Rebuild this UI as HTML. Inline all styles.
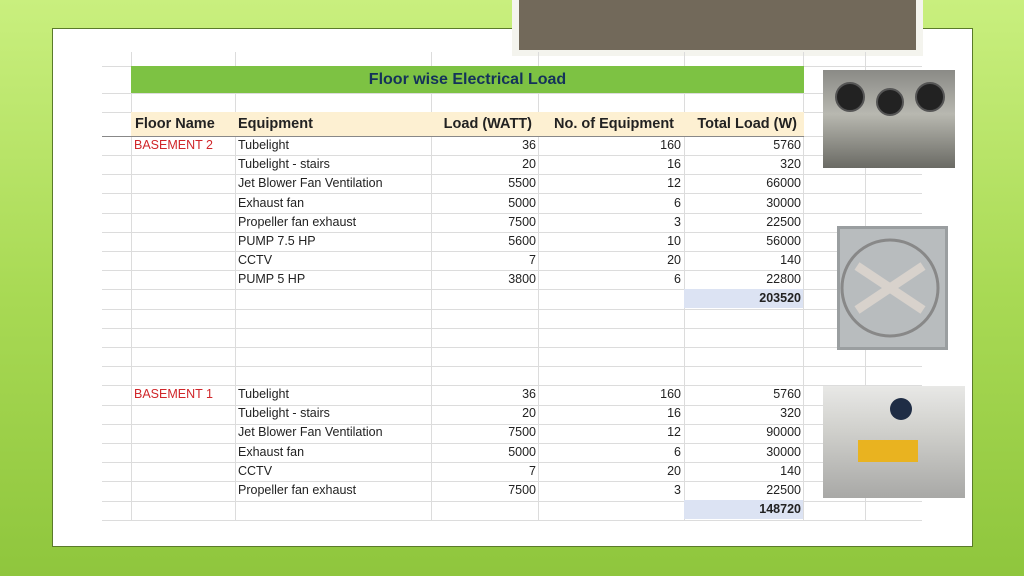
<!DOCTYPE html><html><head><style>
body{margin:0;width:1024px;height:576px;overflow:hidden;background:linear-gradient(180deg,#c9ef7e 0%,#a9da55 50%,#8fc63d 100%);font-family:"Liberation Sans",sans-serif;position:relative}
.panel{position:absolute;left:52px;top:28px;width:921px;height:519px;background:#fff;border:1px solid #5a7a2a;box-sizing:border-box}
.frame{position:absolute;left:512px;top:0;width:411px;height:56px;background:#f4f4ee}
.dark{position:absolute;left:519px;top:0;width:397px;height:50px;background:#72695a}
.c{position:absolute;font-size:12.5px;color:#222;line-height:19px;white-space:nowrap}
.r{text-align:right}
.hl{position:absolute;height:1px;background:#dcdcdc}
.vl{position:absolute;width:1px;background:#dcdcdc}
.red{color:#d0262a}
</style></head><body>
<div class="panel"></div>
<div class="frame"></div><div class="dark"></div>
<div id="g"></div>
<div style="position:absolute;left:131px;top:66px;width:673px;height:27px;background:#7dc243;text-align:center;font:bold 16px/27px 'Liberation Sans',sans-serif;color:#14325a">Floor wise Electrical Load</div>
<div style="position:absolute;left:131px;top:112px;width:673px;height:24px;background:#fdf0d2"></div>
<div style="position:absolute;left:102px;top:136px;width:702px;height:1px;background:#888"></div>
<div style="position:absolute;left:684px;top:289px;width:119px;height:19px;background:#dce3f3"></div>
<div style="position:absolute;left:684px;top:500px;width:119px;height:19px;background:#dce3f3"></div>
<div class="c" style="left:135px;top:115px;font-weight:bold;font-size:14.5px">Floor Name</div>
<div class="c" style="left:238px;top:115px;font-weight:bold;font-size:14.5px">Equipment</div>
<div class="c r" style="left:431px;width:101px;top:115px;font-weight:bold;font-size:14.5px">Load (WATT)</div>
<div class="c r" style="left:538px;width:136px;top:115px;font-weight:bold;font-size:14.5px">No. of Equipment</div>
<div class="c r" style="left:684px;width:113px;top:115px;font-weight:bold;font-size:14.5px">Total Load (W)</div>
<div id="t"></div>
<script>
var g=document.getElementById('g'),h='',t='';
var ys=[66,93,112,136];for(var y=155;y<=520;y+=19.2)ys.push(Math.round(y));
ys.forEach(function(y){h+='<div class="hl" style="left:102px;top:'+y+'px;width:820px"></div>'});
[131,235,431,538,684,803,865].forEach(function(x){h+='<div class="vl" style="left:'+x+'px;top:52px;height:468px"></div>'});
function row(y,a,b,c,d,e,bold){
 if(a)t+='<div class="c red" style="left:134px;top:'+y+'px">'+a+'</div>';
 if(b)t+='<div class="c" style="left:238px;top:'+y+'px">'+b+'</div>';
 if(c)t+='<div class="c r" style="left:431px;width:105px;top:'+y+'px">'+c+'</div>';
 if(d)t+='<div class="c r" style="left:538px;width:143px;top:'+y+'px">'+d+'</div>';
 if(e)t+='<div class="c r" style="left:684px;width:117px;top:'+y+'px;'+(bold?'font-weight:bold':'')+'">'+e+'</div>';
}
var r1=[['BASEMENT 2','Tubelight',36,160,5760],['','Tubelight - stairs',20,16,320],['','Jet Blower Fan Ventilation',5500,12,66000],['','Exhaust fan',5000,6,30000],['','Propeller fan exhaust',7500,3,22500],['','PUMP 7.5 HP',5600,10,56000],['','CCTV',7,20,140],['','PUMP 5 HP',3800,6,22800]];
r1.forEach(function(r,i){row(136+i*19.2,r[0],r[1],r[2],r[3],r[4])});
row(289,'','','','','203520',1);
var r2=[['BASEMENT 1','Tubelight',36,160,5760],['','Tubelight - stairs',20,16,320],['','Jet Blower Fan Ventilation',7500,12,90000],['','Exhaust fan',5000,6,30000],['','CCTV',7,20,140],['','Propeller fan exhaust',7500,3,22500]];
r2.forEach(function(r,i){row(385+i*19.2,r[0],r[1],r[2],r[3],r[4])});
row(500,'','','','','148720',1);
g.innerHTML=h;document.getElementById('t').innerHTML=t;
</script>
<div style="position:absolute;left:823px;top:70px;width:132px;height:98px;background:linear-gradient(180deg,#8a8a86,#b8b8b0 45%,#6a6a64)"></div>
<svg style="position:absolute;left:823px;top:70px" width="132" height="60"><g fill="#222" stroke="#555" stroke-width="2"><circle cx="27" cy="27" r="14"/><circle cx="67" cy="32" r="13"/><circle cx="107" cy="27" r="14"/></g></svg>
<div style="position:absolute;left:837px;top:226px;width:111px;height:124px;background:#b8bcbe;border:3px solid #9a9ea0;box-sizing:border-box"></div>
<svg style="position:absolute;left:837px;top:226px" width="111" height="124"><circle cx="53" cy="62" r="48" fill="none" stroke="#888" stroke-width="3"/><g stroke="#d8d2cc" stroke-width="9"><line x1="20" y1="40" x2="86" y2="84"/><line x1="20" y1="84" x2="86" y2="40"/></g></svg>
<div style="position:absolute;left:823px;top:386px;width:142px;height:112px;background:linear-gradient(180deg,#e8e8e6 0%,#d0d0cc 40%,#a8a8a6 100%)"></div>
<div style="position:absolute;left:858px;top:440px;width:60px;height:22px;background:#e9b320"></div>
<div style="position:absolute;left:890px;top:398px;width:22px;height:22px;border-radius:50%;background:#1f2d45"></div>
</body></html>
